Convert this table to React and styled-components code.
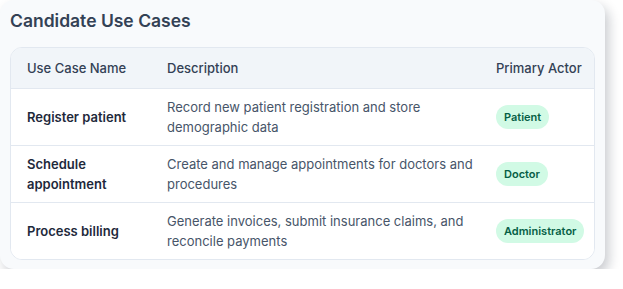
import React from 'react';
import styled, { createGlobalStyle } from 'styled-components';

const Global = createGlobalStyle`
    body {
        margin: 0;
        background: #ffffff;
        font-family: Inter, "Noto Sans", sans-serif;
    }
`

const Card = styled.section`
    width: 605px;
    box-sizing: border-box;
    padding: 9px 10px 9px 10px;
    background: #f8fafc;
    border-radius: 14px;
    box-shadow: 4px 6px 12px rgba(15, 23, 42, 0.22);
`

const Title = styled.h2`
    margin: 0 0 14px 0;
    font-size: 17.5px;
    line-height: 24px;
    font-weight: 600;
    color: #334155;
`

const Table = styled.div`
    background: #ffffff;
    border: 1px solid #e2e8f0;
    border-radius: 12px;
    overflow: hidden;
`

const Row = styled.div`
    display: grid;
    grid-template-columns: 140px 329px 1fr;
    align-items: center;
    background: ${p => (p.head ? '#f1f5f9' : '#ffffff')};
    border-top: ${p => (p.first ? 'none' : '1px solid #e2e8f0')};
    min-height: ${p => (p.head ? '40px' : '56px')};
`

const HeadCell = styled.div`
    padding: 0 0 0 16px;
    font-size: 13px;
    font-weight: 500;
    color: #334155;
    white-space: nowrap;
`

const NameCell = styled.div`
    padding: 8px 16px;
    font-size: 13px;
    line-height: 20px;
    font-weight: 600;
    color: #1e293b;
`

const DescCell = styled.div`
    padding: 8px 0 8px 16px;
    font-size: 13px;
    line-height: 20px;
    color: #475569;
`

const ActorCell = styled.div`
    padding: 8px 0 8px 16px;
`

const Badge = styled.span`
    display: inline-block;
    padding: 4px 8px;
    border-radius: 999px;
    background: #d1fae5;
    color: #065f46;
    font-size: 11px;
    line-height: 16px;
    font-weight: 600;
`

const cases = [
    { name: 'Register patient', desc: 'Record new patient registration and store demographic data', actor: 'Patient' },
    { name: 'Schedule appointment', desc: 'Create and manage appointments for doctors and procedures', actor: 'Doctor' },
    { name: 'Process billing', desc: 'Generate invoices, submit insurance claims, and reconcile payments', actor: 'Administrator' },
];

const App = () => (
    <>
        <Global />
        <Card>
            <Title>Candidate Use Cases</Title>
            <Table>
                <Row head first>
                    <HeadCell>Use Case Name</HeadCell>
                    <HeadCell>Description</HeadCell>
                    <HeadCell>Primary Actor</HeadCell>
                </Row>
                {cases.map(c => (
                    <Row key={c.name}>
                        <NameCell>{c.name}</NameCell>
                        <DescCell>{c.desc}</DescCell>
                        <ActorCell><Badge>{c.actor}</Badge></ActorCell>
                    </Row>
                ))}
            </Table>
        </Card>
    </>
);

export default App;
